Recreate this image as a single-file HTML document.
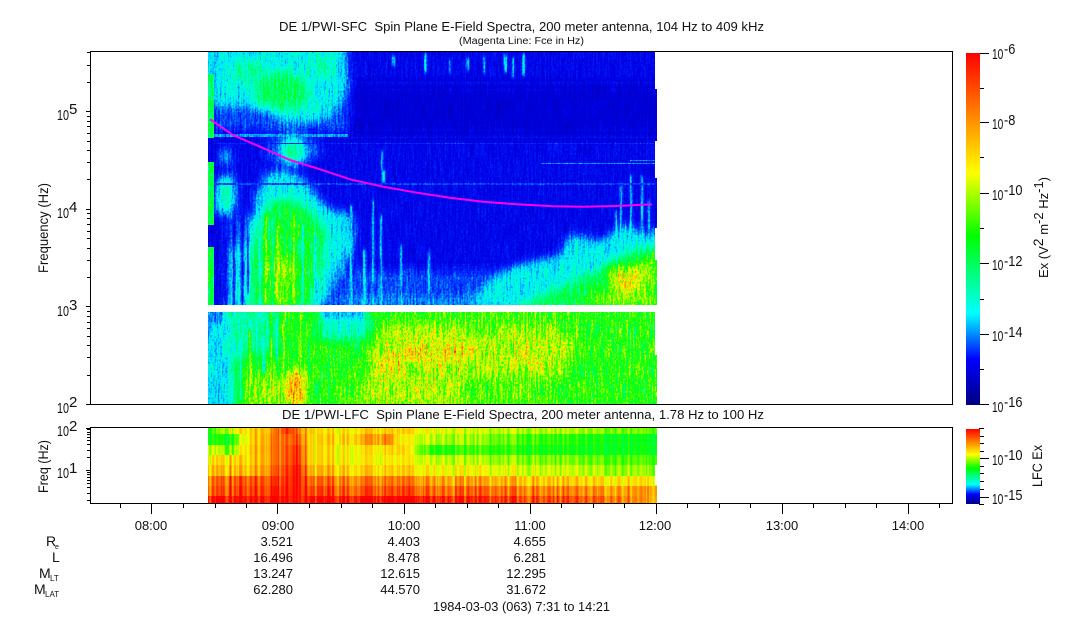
<!DOCTYPE html>
<html><head><meta charset="utf-8"><style>
html,body{margin:0;padding:0;background:#fff;width:1083px;height:620px;overflow:hidden}
svg{display:block}
text{font-family:"Liberation Sans",Arial,sans-serif;font-size:13px;fill:#111}
.n{font-size:15px}
</style></head><body>
<svg width="1083" height="620" viewBox="0 0 1083 620" xmlns="http://www.w3.org/2000/svg">
<defs>
<linearGradient id="cb" x1="0" y1="1" x2="0" y2="0">
<stop offset="0" stop-color="#000080"/><stop offset=".13" stop-color="#0000ff"/><stop offset=".26" stop-color="#00ffff"/><stop offset=".48" stop-color="#00ff00"/><stop offset=".66" stop-color="#ffff00"/><stop offset="1" stop-color="#ff0000"/>
</linearGradient>
<filter id="spec" filterUnits="userSpaceOnUse" x="200" y="45" width="470" height="370" color-interpolation-filters="sRGB">
<feTurbulence type="fractalNoise" baseFrequency="0.6 0.05" numOctaves="2" seed="4" result="t1"/>
<feColorMatrix in="t1" type="matrix" values="1 0 0 0 0 1 0 0 0 0 1 0 0 0 0 0 0 0 0 1" result="n1"/>
<feTurbulence type="fractalNoise" baseFrequency="0.55 0.45" numOctaves="1" seed="9" result="t2"/>
<feColorMatrix in="t2" type="matrix" values="1 0 0 0 0 1 0 0 0 0 1 0 0 0 0 0 0 0 0 1" result="n2"/>
<feComposite in="SourceGraphic" in2="n1" operator="arithmetic" k1=".8" k2=".6" k3="0" k4="0" result="a"/>
<feComposite in="a" in2="n2" operator="arithmetic" k1=".7" k2=".65" k3="0" k4="0" result="b"/>
<feComponentTransfer in="b">
<feFuncR type="table" tableValues="0 0 0 0 0 0 0 0 0 0 .11 .39 .67 .94 1 1 1 1 1 1 1"/>
<feFuncG type="table" tableValues="0 0 0 .15 .54 .92 1 1 1 1 1 1 1 1 .88 .74 .59 .44 .29 .15 0"/>
<feFuncB type="table" tableValues=".5 .7 .9 1 1 1 .82 .59 .36 .14 0 0 0 0 0 0 0 0 0 0 0"/>
</feComponentTransfer>
</filter>
<filter id="lfc" filterUnits="userSpaceOnUse" x="200" y="420" width="470" height="90" color-interpolation-filters="sRGB">
<feTurbulence type="fractalNoise" baseFrequency="0.4 0.0005" numOctaves="2" seed="7" result="t1"/>
<feColorMatrix in="t1" type="matrix" values="1 0 0 0 0 1 0 0 0 0 1 0 0 0 0 0 0 0 0 1" result="n1"/>
<feComposite in="SourceGraphic" in2="n1" operator="arithmetic" k1=".5" k2=".75" k3="0" k4="0" result="a"/>
<feComponentTransfer in="a">
<feFuncR type="table" tableValues="0 0 0 0 0 0 0 0 0 0 .11 .39 .67 .94 1 1 1 1 1 1 1"/>
<feFuncG type="table" tableValues="0 0 0 .15 .54 .92 1 1 1 1 1 1 1 1 .88 .74 .59 .44 .29 .15 0"/>
<feFuncB type="table" tableValues=".5 .7 .9 1 1 1 .82 .59 .36 .14 0 0 0 0 0 0 0 0 0 0 0"/>
</feComponentTransfer>
</filter>
<filter id="bl4" filterUnits="userSpaceOnUse" x="150" y="0" width="570" height="360"><feGaussianBlur stdDeviation="5"/></filter>
<filter id="bl3" filterUnits="userSpaceOnUse" x="150" y="280" width="570" height="180"><feGaussianBlur stdDeviation="6"/></filter>
<filter id="bl1" filterUnits="userSpaceOnUse" x="150" y="0" width="570" height="420"><feGaussianBlur stdDeviation=".7 2"/></filter>
<clipPath id="ctop"><path d="M208 52H655V89H657V141H655V178H657V228H655V260H657V305H208Z"/></clipPath>
<clipPath id="cbot"><path d="M208 312H655V355H657V405H208Z"/></clipPath>
<clipPath id="clf"><path d="M208 428H657V465H655V485H657V504H208Z"/></clipPath>
<linearGradient id="r1" gradientUnits="userSpaceOnUse" x1="208" x2="657" y1="0" y2="0"><stop offset="0" stop-color="hsl(0,0%,50%)"/><stop offset=".07" stop-color="hsl(0,0%,68%)"/><stop offset=".14" stop-color="hsl(0,0%,78%)"/><stop offset=".18" stop-color="hsl(0,0%,95%)"/><stop offset=".22" stop-color="hsl(0,0%,75%)"/><stop offset=".25" stop-color="hsl(0,0%,68%)"/><stop offset=".38" stop-color="hsl(0,0%,72%)"/><stop offset=".6" stop-color="hsl(0,0%,62%)"/><stop offset=".78" stop-color="hsl(0,0%,60%)"/><stop offset="1" stop-color="hsl(0,0%,54%)"/></linearGradient>
<linearGradient id="r2" gradientUnits="userSpaceOnUse" x1="208" x2="657" y1="0" y2="0"><stop offset="0" stop-color="hsl(0,0%,50%)"/><stop offset=".05" stop-color="hsl(0,0%,47%)"/><stop offset=".09" stop-color="hsl(0,0%,70%)"/><stop offset=".16" stop-color="hsl(0,0%,85%)"/><stop offset=".2" stop-color="hsl(0,0%,90%)"/><stop offset=".23" stop-color="hsl(0,0%,70%)"/><stop offset=".3" stop-color="hsl(0,0%,72%)"/><stop offset=".4" stop-color="hsl(0,0%,82%)"/><stop offset=".43" stop-color="hsl(0,0%,65%)"/><stop offset=".6" stop-color="hsl(0,0%,58%)"/><stop offset=".78" stop-color="hsl(0,0%,50%)"/><stop offset="1" stop-color="hsl(0,0%,45%)"/></linearGradient>
<linearGradient id="r3" gradientUnits="userSpaceOnUse" x1="208" x2="657" y1="0" y2="0"><stop offset="0" stop-color="hsl(0,0%,65%)"/><stop offset=".05" stop-color="hsl(0,0%,55%)"/><stop offset=".09" stop-color="hsl(0,0%,72%)"/><stop offset=".16" stop-color="hsl(0,0%,85%)"/><stop offset=".2" stop-color="hsl(0,0%,95%)"/><stop offset=".23" stop-color="hsl(0,0%,70%)"/><stop offset=".3" stop-color="hsl(0,0%,68%)"/><stop offset=".43" stop-color="hsl(0,0%,70%)"/><stop offset=".5" stop-color="hsl(0,0%,50%)"/><stop offset=".6" stop-color="hsl(0,0%,52%)"/><stop offset=".78" stop-color="hsl(0,0%,47%)"/><stop offset="1" stop-color="hsl(0,0%,46%)"/></linearGradient>
<linearGradient id="r4" gradientUnits="userSpaceOnUse" x1="208" x2="657" y1="0" y2="0"><stop offset="0" stop-color="hsl(0,0%,70%)"/><stop offset=".09" stop-color="hsl(0,0%,71%)"/><stop offset=".16" stop-color="hsl(0,0%,85%)"/><stop offset=".2" stop-color="hsl(0,0%,96%)"/><stop offset=".23" stop-color="hsl(0,0%,70%)"/><stop offset=".43" stop-color="hsl(0,0%,66%)"/><stop offset=".6" stop-color="hsl(0,0%,60%)"/><stop offset=".78" stop-color="hsl(0,0%,56%)"/><stop offset="1" stop-color="hsl(0,0%,52%)"/></linearGradient>
<linearGradient id="r5" gradientUnits="userSpaceOnUse" x1="208" x2="657" y1="0" y2="0"><stop offset="0" stop-color="hsl(0,0%,75%)"/><stop offset=".09" stop-color="hsl(0,0%,74%)"/><stop offset=".16" stop-color="hsl(0,0%,88%)"/><stop offset=".2" stop-color="hsl(0,0%,100%)"/><stop offset=".23" stop-color="hsl(0,0%,75%)"/><stop offset=".43" stop-color="hsl(0,0%,70%)"/><stop offset=".6" stop-color="hsl(0,0%,66%)"/><stop offset=".78" stop-color="hsl(0,0%,62%)"/><stop offset="1" stop-color="hsl(0,0%,57%)"/></linearGradient>
<linearGradient id="r6" gradientUnits="userSpaceOnUse" x1="208" x2="657" y1="0" y2="0"><stop offset="0" stop-color="hsl(0,0%,85%)"/><stop offset=".16" stop-color="hsl(0,0%,92%)"/><stop offset=".2" stop-color="hsl(0,0%,100%)"/><stop offset=".23" stop-color="hsl(0,0%,85%)"/><stop offset=".43" stop-color="hsl(0,0%,82%)"/><stop offset=".6" stop-color="hsl(0,0%,78%)"/><stop offset=".78" stop-color="hsl(0,0%,72%)"/><stop offset="1" stop-color="hsl(0,0%,68%)"/></linearGradient>
<linearGradient id="r7" gradientUnits="userSpaceOnUse" x1="208" x2="657" y1="0" y2="0"><stop offset="0" stop-color="hsl(0,0%,88%)"/><stop offset=".16" stop-color="hsl(0,0%,95%)"/><stop offset=".2" stop-color="hsl(0,0%,100%)"/><stop offset=".23" stop-color="hsl(0,0%,90%)"/><stop offset=".6" stop-color="hsl(0,0%,87%)"/><stop offset=".78" stop-color="hsl(0,0%,82%)"/><stop offset="1" stop-color="hsl(0,0%,78%)"/></linearGradient>
<linearGradient id="r8" gradientUnits="userSpaceOnUse" x1="208" x2="657" y1="0" y2="0"><stop offset="0" stop-color="hsl(0,0%,100%)"/><stop offset=".48" stop-color="hsl(0,0%,100%)"/><stop offset=".7" stop-color="hsl(0,0%,92%)"/><stop offset=".9" stop-color="hsl(0,0%,86%)"/><stop offset="1" stop-color="hsl(0,0%,76%)"/></linearGradient>
</defs>

<!-- top spectrogram -->
<g clip-path="url(#ctop)"><g filter="url(#spec)">
<rect x="200" y="45" width="470" height="270" fill="hsl(0,0%,11%)"/>
<g filter="url(#bl4)">
<rect x="340" y="85" width="330" height="50" fill="hsl(0,0%,7%)"/>
<rect x="214" y="95" width="135" height="36" fill="hsl(0,0%,16%)"/>
<path d="M212 40H345L348 90L332 114L305 124L270 108L240 104L212 108Z" fill="hsl(0,0%,27%)"/>
<ellipse cx="282" cy="92" rx="27" ry="19" fill="hsl(0,0%,40%)"/>
<ellipse cx="250" cy="72" rx="22" ry="11" fill="hsl(0,0%,33%)"/>
<ellipse cx="322" cy="66" rx="12" ry="12" fill="hsl(0,0%,32%)"/>
<path d="M272 115H300L290 128Z" fill="hsl(0,0%,24%)"/>
<ellipse cx="292" cy="150" rx="28" ry="16" fill="hsl(0,0%,18%)"/>
<ellipse cx="293" cy="151" rx="9" ry="12" fill="hsl(0,0%,38%)"/>
<ellipse cx="226" cy="158" rx="5" ry="9" fill="hsl(0,0%,26%)"/>
<ellipse cx="226" cy="195" rx="9" ry="21" fill="hsl(0,0%,33%)"/>
<rect x="225" y="215" width="130" height="95" fill="hsl(0,0%,17%)"/>
<path d="M226 310L230 250L250 235L255 200L265 175L285 170L305 180L320 200L332 212L345 212L355 230L345 255L330 285L320 310Z" fill="hsl(0,0%,27%)"/>
<path d="M252 310L251 260L262 218L275 200L300 203L312 215L325 232L322 262L315 285L310 310Z" fill="hsl(0,0%,43%)"/>
<ellipse cx="281" cy="280" rx="12" ry="34" fill="hsl(0,0%,55%)"/>
<path d="M340 310L355 270L520 270L520 310Z" fill="hsl(0,0%,16%)"/>
<rect x="340" y="298" width="320" height="14" fill="hsl(0,0%,21%)"/>
<path d="M468 310L500 272L530 262L560 256L570 234L600 242L625 224L650 236L662 226V310Z" fill="hsl(0,0%,27%)"/>
<path d="M515 310L560 288L600 270L630 252L662 246V310Z" fill="hsl(0,0%,42%)"/>
<path d="M570 310L610 290L630 268L662 252V310Z" fill="hsl(0,0%,56%)"/>
<ellipse cx="626" cy="281" rx="15" ry="14" fill="hsl(0,0%,68%)"/>
</g>
<!-- dark & light vertical streaks in the plume -->
<g filter="url(#bl1)">
<g fill="hsl(0,0%,12%)">
<rect x="218" y="225" width="2" height="80"/><rect x="224" y="215" width="3" height="90"/><rect x="233" y="205" width="2" height="100"/><rect x="241" y="215" width="3" height="90"/><rect x="247" y="235" width="2" height="60"/>
</g>
<g fill="hsl(0,0%,25%)">
<rect x="259" y="205" width="2" height="100"/><rect x="272" y="215" width="1" height="90"/><rect x="302" y="225" width="2" height="80"/><rect x="314" y="235" width="3" height="70"/>
</g>
<g fill="hsl(0,0%,62%)">
<rect x="265" y="215" width="2" height="90"/><rect x="277" y="225" width="2" height="80"/><rect x="293" y="215" width="2" height="90"/><rect x="305" y="240" width="1" height="65"/>
</g>
<g fill="hsl(0,0%,26%)">
<rect x="350" y="205" width="2" height="100"/><rect x="363" y="250" width="3" height="55"/><rect x="372" y="200" width="2" height="105"/><rect x="380" y="215" width="2" height="90"/><rect x="400" y="245" width="2" height="60"/><rect x="428" y="250" width="2" height="45"/><rect x="620" y="185" width="2" height="50"/><rect x="630" y="175" width="2" height="70"/><rect x="641" y="175" width="2" height="70"/><rect x="615" y="210" width="2" height="30"/><rect x="648" y="200" width="2" height="30"/>
<rect x="392" y="56" width="3" height="10"/><rect x="424" y="54" width="3" height="18"/><rect x="449" y="60" width="2" height="14"/><rect x="466" y="58" width="3" height="12"/><rect x="483" y="56" width="2" height="18"/><rect x="504" y="54" width="3" height="18"/><rect x="512" y="58" width="2" height="20"/><rect x="522" y="54" width="3" height="22"/>
<rect x="381" y="150" width="2" height="18"/><rect x="382" y="170" width="3" height="14"/>
</g>
</g>
<g fill="hsl(0,0%,20%)">
<rect x="541" y="163" width="114" height="1"/><rect x="630" y="160" width="25" height="1"/>
</g>
<rect x="208" y="134" width="140" height="3" fill="hsl(0,0%,21%)"/>
<rect x="208" y="183" width="447" height="2" fill="hsl(0,0%,16%)"/>
<rect x="208" y="143" width="447" height="1" fill="hsl(0,0%,14%)"/>
<rect x="208" y="52" width="6" height="22" fill="hsl(0,0%,25%)"/>
<rect x="208" y="74" width="6" height="64" fill="hsl(0,0%,40%)"/>
<rect x="208" y="138" width="6" height="24" fill="hsl(0,0%,10%)"/>
<rect x="208" y="162" width="6" height="63" fill="hsl(0,0%,43%)"/>
<rect x="208" y="225" width="6" height="22" fill="hsl(0,0%,10%)"/>
<rect x="208" y="247" width="6" height="58" fill="hsl(0,0%,43%)"/>
</g></g>

<!-- lower spectrogram -->
<g clip-path="url(#cbot)"><g filter="url(#spec)">
<rect x="200" y="305" width="470" height="105" fill="hsl(0,0%,48%)"/>
<g filter="url(#bl3)">
<rect x="190" y="295" width="46" height="125" fill="hsl(0,0%,25%)"/>
<rect x="228" y="300" width="50" height="55" fill="hsl(0,0%,33%)"/>
<rect x="320" y="300" width="50" height="40" fill="hsl(0,0%,30%)"/>
<rect x="245" y="370" width="60" height="45" fill="hsl(0,0%,56%)"/>
<rect x="340" y="380" width="45" height="30" fill="hsl(0,0%,54%)"/>
<path d="M365 410L372 340L390 325L560 325L578 345L562 375L470 375L465 410Z" fill="hsl(0,0%,60%)"/>
<rect x="465" y="375" width="95" height="35" fill="hsl(0,0%,53%)"/>
<rect x="380" y="305" width="195" height="16" fill="hsl(0,0%,51%)"/>
<rect x="575" y="300" width="95" height="115" fill="hsl(0,0%,49%)"/>
<ellipse cx="432" cy="352" rx="40" ry="8" fill="hsl(0,0%,72%)"/>
<ellipse cx="385" cy="365" rx="14" ry="14" fill="hsl(0,0%,68%)"/>
<ellipse cx="525" cy="355" rx="18" ry="9" fill="hsl(0,0%,67%)"/>
<ellipse cx="297" cy="388" rx="6" ry="17" fill="hsl(0,0%,90%)"/>
</g>
<g filter="url(#bl1)">
<rect x="208" y="310" width="14" height="14" fill="hsl(0,0%,20%)"/>
<rect x="322" y="310" width="42" height="9" fill="hsl(0,0%,23%)"/>
<g fill="hsl(0,0%,60%)"><rect x="249" y="330" width="2" height="75"/><rect x="270" y="312" width="2" height="90"/><rect x="283" y="312" width="2" height="60"/><rect x="300" y="312" width="2" height="50"/><rect x="575" y="312" width="2" height="30"/></g>
<g fill="hsl(0,0%,30%)"><rect x="240" y="340" width="2" height="60"/><rect x="262" y="318" width="3" height="55"/><rect x="276" y="318" width="2" height="40"/></g>
</g>
</g></g>

<!-- magenta line -->
<path d="M210 119.3L233 135L260 146.7L290 160L317 168.3L350 179.3L383 186.7L417 192.7L450 197.7L483 201.7L517 204.3L553 206.3L583 206.7L617 206L652 204.3" fill="none" stroke="#ff00ff" stroke-width="2"/>

<!-- LFC -->
<g clip-path="url(#clf)"><g filter="url(#lfc)">
<rect x="200" y="420" width="470" height="14" fill="url(#r1)"/>
<rect x="200" y="434" width="470" height="11" fill="url(#r2)"/>
<rect x="200" y="445" width="470" height="10" fill="url(#r3)"/>
<rect x="200" y="455" width="470" height="10" fill="url(#r4)"/>
<rect x="200" y="465" width="470" height="11" fill="url(#r5)"/>
<rect x="200" y="476" width="470" height="10" fill="url(#r6)"/>
<rect x="200" y="486" width="470" height="10" fill="url(#r7)"/>
<rect x="200" y="496" width="470" height="12" fill="url(#r8)"/>
</g></g>

<!-- frames & ticks -->
<g fill="none" stroke="#000" stroke-width="1" shape-rendering="crispEdges">
<rect x="90.5" y="51.5" width="862" height="353"/>
<rect x="90.5" y="427.5" width="862" height="76"/>
<path d="M86 111.5H90M86 209.5H90M86 306.5H90M86 404.5H90M87 82.5H90M87 65.5H90M87 52.5H90M87 179.5H90M87 162.5H90M87 150.5H90M87 141.5H90M87 133.5H90M87 126.5H90M87 121.5H90M87 116.5H90M87 277.5H90M87 260.5H90M87 248.5H90M87 238.5H90M87 231.5H90M87 224.5H90M87 218.5H90M87 213.5H90M87 375.5H90M87 357.5H90M87 345.5H90M87 336.5H90M87 328.5H90M87 322.5H90M87 316.5H90M87 311.5H90"/>
<path d="M86 428.5H90M86 470.5H90M87 457.5H90M87 450.5H90M87 444.5H90M87 440.5H90M87 437.5H90M87 434.5H90M87 432.5H90M87 429.5H90M87 472.5H90M87 474.5H90M87 477.5H90M87 480.5H90M87 483.5H90M87 487.5H90M87 493.5H90M87 500.5H90"/>
<path d="M151.5 504V514M277.5 504V514M404.5 504V514M530.5 504V514M656.5 504V514M782.5 504V514M908.5 504V514"/>
<path d="M120.5 504V508M183.5 504V508M215.5 504V508M246.5 504V508M309.5 504V508M341.5 504V508M372.5 504V508M435.5 504V508M467.5 504V508M498.5 504V508M561.5 504V508M593.5 504V508M624.5 504V508M687.5 504V508M719.5 504V508M750.5 504V508M813.5 504V508M845.5 504V508M876.5 504V508M939.5 504V508"/>
<path d="M979 53.5H989M979 122.5H989M979 193.5H989M979 263.5H989M979 334.5H989M979 404.5H989M979 88.5H984M979 157.5H984M979 228.5H984M979 299.5H984M979 369.5H984"/>
<path d="M979 458.5H989M979 497.5H989M979 428.5H984M979 436.5H984M979 443.5H984M979 451.5H984M979 466.5H984M979 473.5H984M979 481.5H984M979 489.5H984M979 504.5H984"/>
</g>
<rect x="966" y="53" width="14" height="352" fill="url(#cb)"/>
<rect x="966" y="429" width="14" height="75" fill="url(#cb)"/>

<!-- titles -->
<text x="279" y="31" textLength="485" lengthAdjust="spacingAndGlyphs" xml:space="preserve">DE 1/PWI-SFC  Spin Plane E-Field Spectra, 200 meter antenna, 104 Hz to 409 kHz</text>
<text x="459" y="44" textLength="125" lengthAdjust="spacingAndGlyphs" style="font-size:10px">(Magenta Line: Fce in Hz)</text>
<text x="282" y="419" textLength="482" lengthAdjust="spacingAndGlyphs" xml:space="preserve">DE 1/PWI-LFC  Spin Plane E-Field Spectra, 200 meter antenna, 1.78 Hz to 100 Hz</text>

<!-- y labels -->
<g class="n">
<text class="n" transform="translate(57,120) scale(.72,1)">10</text><text class="n" transform="translate(69,114)">5</text>
<text class="n" transform="translate(57,218) scale(.72,1)">10</text><text class="n" transform="translate(69,212)">4</text>
<text class="n" transform="translate(57,316) scale(.72,1)">10</text><text class="n" transform="translate(69,310)">3</text>
<text class="n" transform="translate(57,413) scale(.72,1)">10</text><text class="n" transform="translate(69,407)">2</text>
<text class="n" transform="translate(57,436) scale(.72,1)">10</text><text class="n" transform="translate(69,431)">2</text>
<text class="n" transform="translate(57,478) scale(.72,1)">10</text><text class="n" transform="translate(69,473)">1</text>
</g>
<text transform="translate(48,273) rotate(-90)" textLength="90" lengthAdjust="spacingAndGlyphs" style="font-size:14px">Frequency (Hz)</text>
<text transform="translate(48,493) rotate(-90)" textLength="53" lengthAdjust="spacingAndGlyphs" style="font-size:14px">Freq (Hz)</text>

<!-- colorbar labels -->
<text class="n" transform="translate(992,59) scale(.68,1)">10</text><text class="n" transform="translate(1004,54) scale(.85,1)">-6</text>
<text class="n" transform="translate(992,129) scale(.68,1)">10</text><text class="n" transform="translate(1004,125) scale(.85,1)">-8</text>
<text class="n" transform="translate(992,200) scale(.68,1)">10</text><text class="n" transform="translate(1004,195) scale(.85,1)">-10</text>
<text class="n" transform="translate(992,270) scale(.68,1)">10</text><text class="n" transform="translate(1004,266) scale(.85,1)">-12</text>
<text class="n" transform="translate(992,341) scale(.68,1)">10</text><text class="n" transform="translate(1004,337) scale(.85,1)">-14</text>
<text class="n" transform="translate(992,412) scale(.68,1)">10</text><text class="n" transform="translate(1004,407) scale(.85,1)">-16</text>
<text class="n" transform="translate(992,465) scale(.68,1)">10</text><text class="n" transform="translate(1004,460) scale(.85,1)">-10</text>
<text class="n" transform="translate(992,504) scale(.68,1)">10</text><text class="n" transform="translate(1004,500) scale(.85,1)">-15</text>
<text transform="translate(1048,278) rotate(-90)" style="font-size:13px">Ex (V<tspan dy="-5" style="font-size:14px">2</tspan><tspan dy="5"> m</tspan><tspan dy="-5" style="font-size:13px">-2</tspan><tspan dy="5"> Hz</tspan><tspan dy="-5" style="font-size:13px">-1</tspan><tspan dy="5">)</tspan></text>
<text transform="translate(1042,487) rotate(-90)" textLength="42" lengthAdjust="spacingAndGlyphs" style="font-size:14px">LFC Ex</text>

<!-- time labels -->
<g text-anchor="middle">
<text x="151" y="530">08:00</text><text x="278" y="530">09:00</text><text x="404" y="530">10:00</text><text x="530" y="530">11:00</text><text x="655" y="530">12:00</text><text x="782" y="530">13:00</text><text x="908" y="530">14:00</text>
</g>
<!-- orbit rows -->
<g text-anchor="end">
<text x="293" y="546">3.521</text><text x="420" y="546">4.403</text><text x="546" y="546">4.655</text>
<text x="293" y="562">16.496</text><text x="420" y="562">8.478</text><text x="546" y="562">6.281</text>
<text x="293" y="578">13.247</text><text x="420" y="578">12.615</text><text x="546" y="578">12.295</text>
<text x="293" y="594">62.280</text><text x="420" y="594">44.570</text><text x="546" y="594">31.672</text>
</g>
<text x="46" y="546" style="font-size:14px">R</text><text x="55" y="549" style="font-size:7px">e</text>
<text x="52" y="562" style="font-size:14px">L</text>
<text x="39" y="578" style="font-size:14px">M</text><text x="50" y="581" style="font-size:8px">LT</text>
<text x="34" y="594" style="font-size:14px">M</text><text x="45" y="597" style="font-size:8px">LAT</text>
<text x="433" y="611" textLength="177" lengthAdjust="spacingAndGlyphs">1984-03-03 (063) 7:31 to 14:21</text>
</svg>
</body></html>
